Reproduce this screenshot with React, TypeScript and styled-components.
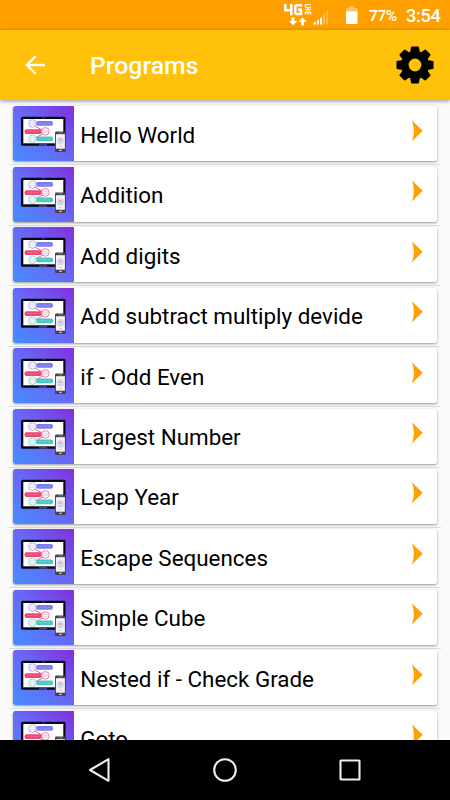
import React from 'react';
import styled, { createGlobalStyle } from 'styled-components';

const GlobalStyle = createGlobalStyle`
  * { box-sizing: border-box; }
  body { margin: 0; font-family: Roboto, "Liberation Sans", sans-serif; }
`;

const Screen = styled.div`
  width: 450px;
  height: 800px;
  display: flex;
  flex-direction: column;
  overflow: hidden;
  background: #fafafa;
`;

const StatusBar = styled.div`
  flex: none;
  height: 30px;
  background: #ffa000;
  color: #fff;
  display: flex;
  align-items: center;
  justify-content: flex-end;
  padding-right: 10px;
`;

const SignalArt = styled.svg`
  display: block;
  width: 80px;
  height: 30px;
  margin-right: 9px;
`;

const Battery = styled.span`
  width: 37px;
  font-size: 15.5px;
  font-weight: 500;
  line-height: 30px;
  letter-spacing: -0.4px;
  padding-top: 1px;
`;

const Clock = styled.span`
  width: 34px;
  font-size: 18.3px;
  font-weight: 500;
  line-height: 30px;
  letter-spacing: -0.35px;
  white-space: nowrap;
  padding-top: 1px;
`;

const AppBar = styled.header`
  flex: none;
  height: 70px;
  background: #ffc10a;
  display: flex;
  align-items: center;
  padding: 0 15px 0 25px;
  box-shadow: 0 1px 4px rgba(0, 0, 0, 0.42);
  z-index: 1;
`;

const BackIcon = styled.svg`
  width: 20px;
  height: 20px;
  display: block;
`;

const Title = styled.h1`
  flex: 1;
  margin: 2px 0 0 45px;
  color: #fff;
  font-size: 24.8px;
  font-weight: 500;
  line-height: 30px;
`;

const GearIcon = styled.svg`
  width: 40px;
  height: 40px;
  display: block;
`;

const List = styled.main`
  flex: 1;
  min-height: 0;
  overflow: hidden;
  padding: 5px 9px 0;
`;

const Row = styled.div`
  height: 60.43px;
  padding: 1.4px 4px 0 3.5px;
  border-bottom: 1px solid #dcdcdc;
`;

const Card = styled.article`
  height: 55px;
  display: flex;
  align-items: center;
  background: #fff;
  border-radius: 2.5px;
  box-shadow: 0 1px 2.5px rgba(0, 0, 0, 0.4);
  overflow: hidden;
`;

const Thumb = styled.svg`
  flex: none;
  width: 61.5px;
  height: 55px;
  display: block;
`;

const Label = styled.span`
  flex: 1;
  margin: 2px 0 0 6.2px;
  font-size: 22.4px;
  line-height: 30px;
  color: #000;
  white-space: nowrap;
`;

const Chevron = styled.svg`
  flex: none;
  width: 12px;
  height: 22px;
  margin: 0 14px 6px 0;
  display: block;
`;

const NavBar = styled.nav`
  flex: none;
  height: 60px;
  background: #000;
  display: flex;
  align-items: center;
  justify-content: center;
  gap: 101px;
  z-index: 1;
`;

const NavIcon = styled.svg`
  width: 24px;
  height: 24px;
  display: block;
  fill: none;
  stroke: #eee;
  stroke-width: 2.1;
  stroke-linejoin: round;
`;

const StatusIcons = () => (
  <SignalArt viewBox="280 0 80 30">
    <g fill="none" stroke="#fff" strokeWidth="2.5">
      <path d="M285.3 4v6.2h7.2M291.3 4v11.2" />
      <path d="M302 5.3h-5.7l-1 1v6.6l1 1h4.7v-4.1h-3" />
    </g>
    <g stroke="#fff" strokeWidth="1.3" fill="none">
      <path d="M305.3 6.9V4.7h5.6M305.3 7.6h5.6M305.3 9.6h5.6M308 7.6v2M305.3 14.6v-2.4h5.6M308 12.2v2.4M310.6 12.2v2.4" />
    </g>
    <g fill="#fff">
      <path d="M291.5 17.5h3v3.4h2.8l-4.3 4.3-4.3-4.3h2.8z" />
      <path d="M301 25.2h3v-3.4h2.8l-4.3-4.3-4.3 4.3h2.8z" />
      <path d="M313.5 22.5l2.3-1v3h-2.3zM317 21l2-1.7v5.2h-2zM320 18.5l2-2v8h-2z" />
      <path opacity=".38" d="M323.3 15l1.8-2v11.5h-1.8zM326.3 11.7l1.5-1.7v14.5h-1.5z" />
      <path opacity=".38" d="M346 8h3V6.2h5V8h3.5v3.3H346z" />
      <rect x="346" y="11.3" width="11.5" height="12.7" rx=".5" />
    </g>
  </SignalArt>
);

const teeth = [0, 45, 90, 135, 180, 225, 270, 315];

const Gear = () => (
  <GearIcon viewBox="-20 -20 40 40">
    <circle r="10.2" fill="none" stroke="#000" strokeWidth="7.6" />
    {teeth.map((angle) => (
      <path
        key={angle}
        d="M-5-12L-3.9-18.1Q-3.7-18.5-3.2-18.5H3.2Q3.7-18.5 3.9-18.1L5-12Z"
        transform={`rotate(${angle})`}
      />
    ))}
  </GearIcon>
);

const ProgramThumb = ({ id }: { id: string }) => (
  <Thumb viewBox="0 0 61.5 55">
    <defs>
      <linearGradient id={id} x1="0" y1="1" x2="1" y2="0">
        <stop offset="0" stopColor="#458eff" />
        <stop offset=".5" stopColor="#6868f6" />
        <stop offset="1" stopColor="#812fdc" />
      </linearGradient>
    </defs>
    <rect width="61.5" height="55" rx="1.5" fill={`url(#${id})`} />
    <rect x="8" y="10.7" width="44.5" height="29" rx="1.5" fill="#080810" />
    <rect x="10.3" y="13" width="40" height="24.3" fill="#fff" />
    <path d="M29 11.8h3" stroke="#4930c4" />
    <path d="M26 38.9h8" stroke="#6065c8" />
    <path d="M22 20l9 5M30 28l-8 4" fill="none" stroke="#c54b87" strokeWidth=".8" />
    <rect x="23" y="15" width="17" height="4.8" rx="2" fill="#7c7bef" />
    <rect x="11.5" y="23.2" width="17.5" height="4.8" rx="2" fill="#ee4773" />
    <rect x="23" y="30.5" width="17" height="4.8" rx="2" fill="#49c5c3" />
    <g strokeWidth=".9" fill="#f7f5fc">
      <circle cx="19.4" cy="17.5" r="3.8" stroke="#aaa8ec" />
      <circle cx="32.4" cy="25.4" r="3.8" stroke="#e87b9a" />
      <circle cx="19.4" cy="32.7" r="3.8" stroke="#86cfd2" />
    </g>
    <g fill="none" strokeWidth=".7">
      <path d="M26 17.5h11" stroke="#9d9af7" strokeDasharray="2 1" />
      <path d="M14 25.6h11" stroke="#fa789a" strokeDasharray="2 1" />
      <path d="M26 32.9h11" stroke="#8ce0dc" strokeDasharray="2 1" />
      <rect x="17.7" y="16.3" width="3.4" height="2.4" stroke="#ddd9f5" />
      <rect x="30.7" y="24.3" width="3.4" height="2.4" stroke="#f5c5d0" />
      <rect x="17.7" y="31.5" width="3.4" height="2.4" stroke="#c2e5e5" />
    </g>
    <rect x="42" y="25.5" width="10.8" height="20.4" rx="1.2" fill="#46434a" />
    <rect x="42.9" y="28.2" width="9" height="14.5" fill="#f3f3f6" />
    <circle cx="47.4" cy="34.8" r="3.5" fill="#dfe2f1" stroke="#cccbdc" strokeWidth=".6" />
    <path d="M46.2 35.2l1.2-2.3 1.3 2.3" fill="none" stroke="#dc8294" strokeWidth=".9" />
    <path d="M46 36.6h3M46 40.5h3" stroke="#b5b8cc" strokeWidth=".6" />
    <path d="M45.5 26.9h4" stroke="#999" strokeWidth=".7" />
    <path d="M46.5 44.3h2" stroke="#eee" strokeWidth="1.3" />
  </Thumb>
);

const programs = [
  'Hello World',
  'Addition',
  'Add digits',
  'Add subtract multiply devide',
  'if - Odd Even',
  'Largest Number',
  'Leap Year',
  'Escape Sequences',
  'Simple Cube',
  'Nested if - Check Grade',
  'Goto',
];

export default function App() {
  return (
    <Screen>
      <GlobalStyle />
      <StatusBar>
        <StatusIcons />
        <Battery>77%</Battery>
        <Clock>3:54</Clock>
      </StatusBar>
      <AppBar>
        <BackIcon viewBox="0 0 20 20" fill="none" stroke="#fff" strokeWidth="2.3">
          <path d="M20 10H2M10.8 1L1.8 10l9 9" />
        </BackIcon>
        <Title>Programs</Title>
        <Gear />
      </AppBar>
      <List>
        {programs.map((name, index) => (
          <Row key={name}>
            <Card>
              <ProgramThumb id={`thumb-${index}`} />
              <Label>{name}</Label>
              <Chevron viewBox="0 0 12 22">
                <path d="M.8.2L11.7 10.8.8 21.6Q5 10.5.8.2Z" fill="#ffa000" />
              </Chevron>
            </Card>
          </Row>
        ))}
      </List>
      <NavBar>
        <NavIcon viewBox="0 0 24 24"><path d="M20.5 1.2v21.6L2 12Z" /></NavIcon>
        <NavIcon viewBox="0 0 24 24"><circle cx="12" cy="12" r="10.8" /></NavIcon>
        <NavIcon viewBox="0 0 24 24"><rect x="2.5" y="2.5" width="19" height="19" rx=".5" /></NavIcon>
      </NavBar>
    </Screen>
  );
}
